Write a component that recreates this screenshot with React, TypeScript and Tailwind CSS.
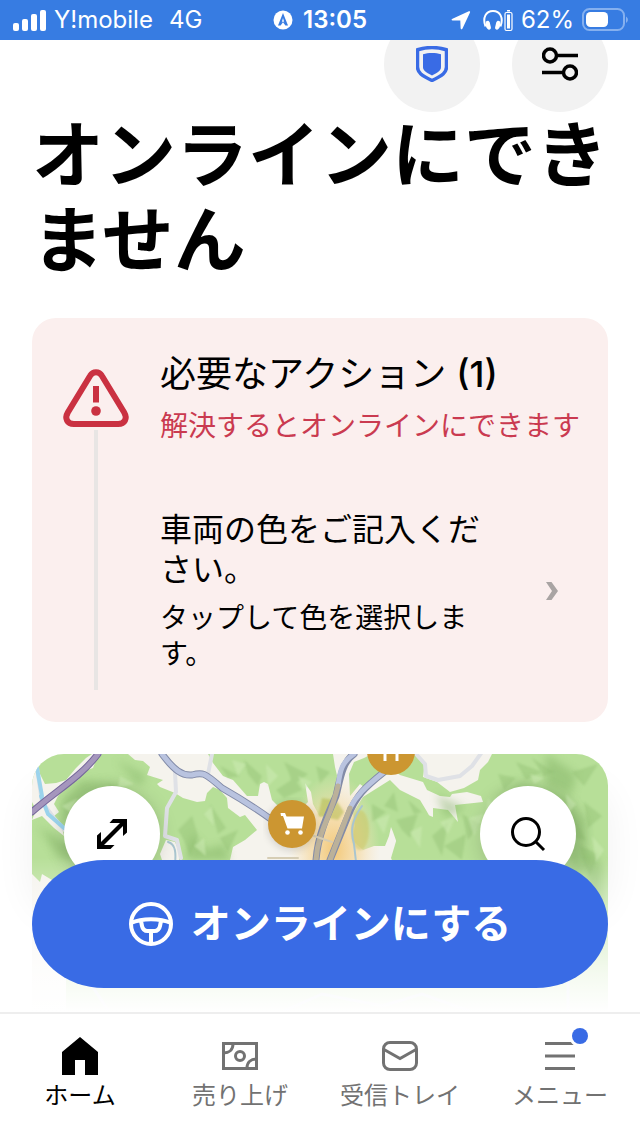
import type { ReactNode } from "react";

const jp = "font-['Inter','Noto_Sans_CJK_JP',sans-serif]";

function StatusBar() {
  return (
    <div className="sticky top-0 z-20 flex h-10 items-center justify-between bg-[#377ce2] px-3 text-2xl leading-10 text-white">
      <div className="flex flex-1 items-center">
        <svg className="mr-2 h-6 w-[34px]" viewBox="0 0 34 24" fill="currentColor" aria-hidden="true">
          <rect x="1" y="15" width="6" height="8" rx="2" />
          <rect x="10" y="11" width="6" height="12" rx="2" />
          <rect x="19" y="6" width="6" height="17" rx="2" />
          <rect x="28" y="2" width="6" height="21" rx="2" />
        </svg>
        <span>Y!mobile</span>
        <span className="ml-4">4G</span>
      </div>
      <div className="flex items-center gap-2.5">
        <svg className="h-5 w-5" viewBox="0 0 20 20" aria-hidden="true">
          <circle cx="10" cy="10" r="9.5" fill="#fff" />
          <path d="M10 3l5 12.500h-2.600L10 12.300 7.600 15.500H5z" fill="#377ce2" />
          <path d="M10 8l1.300 4.500L10 11.200l-1.300 1.300z" fill="#fff" />
        </svg>
        <span className="font-semibold">13:05</span>
      </div>
      <div className="flex flex-1 items-center justify-end">
        <svg className="mr-3 h-5 w-5" viewBox="0 0 20 20" fill="currentColor" aria-hidden="true">
          <path d="M17.800 1.300L1.500 8.700c-1.400.7-1.100 1.600.1 1.700l7.700.2.300 7.500c.1 1.500 1.300 1.700 1.900.3l7.500-16c.4-.9-.3-1.500-1.200-1.100z" />
        </svg>
        <svg className="mr-2 h-6 w-[30px]" viewBox="0 0 30 24" aria-hidden="true">
          <path d="M2.500 18.500C-.8 9.500 3 3 10 3s10.800 6.500 7.500 15.500" fill="none" stroke="#fff" strokeWidth="2" />
          <path d="M3 13.500c1.500-1.400 3-1 3.700.8l1.200 5c.4 1.800-1.700 3.200-3.300 1.800C2.600 19 2.300 16 3 13.500zM17 13.500c-1.500-1.400-3-1-3.700.8l-1.200 5c-.4 1.800 1.700 3.200 3.300 1.800C17.400 19 17.700 16 17 13.500z" fill="#fff" />
          <rect x="22" y="4.500" width="7" height="18" rx="1.500" fill="none" stroke="#fff" strokeWidth="1.200" />
          <rect x="24" y="6.500" width="3" height="14" fill="#fff" />
          <rect x="24" y="2" width="3" height="1.500" fill="#fff" />
        </svg>
        <span>62%</span>
        <svg className="ml-2 h-6 w-[46px]" viewBox="0 0 46 24" aria-hidden="true">
          <rect x="1" y="1" width="41" height="21" rx="6.500" fill="none" stroke="#85b0ef" strokeWidth="2" />
          <rect x="4" y="4" width="22" height="15" rx="4.500" fill="#fff" />
          <path d="M44 8.500c2.500 1.500 2.500 5 0 6.500z" fill="#85b0ef" />
        </svg>
      </div>
    </div>
  );
}

function RoundButton({ label, tone, children }: { label: string; tone: string; children: ReactNode }) {
  return (
    <button type="button" aria-label={label} className={`flex h-24 w-24 items-center justify-center rounded-full ${tone}`}>
      {children}
    </button>
  );
}

function ActionCard() {
  return (
    <section className="flex gap-8 rounded-3xl bg-[#fbefee] py-8 pr-7 pl-8">
      <div className="flex w-16 shrink-0 flex-col items-center pt-4">
        <svg className="h-16 w-16 overflow-visible" viewBox="2 0 64 64" aria-hidden="true">
          <path
            d="M28.300 8.500c2.600-4.500 8.800-4.500 11.400 0l22.500 37c3.500 6 .5 11.500-6 11.500H11.800c-6.500 0-9.500-5.500-6-11.500z"
            fill="none"
            stroke="#ca3141"
            strokeWidth="6"
            transform="translate(0 1)"
          />
          <path d="M31 20h6v16.500h-6z" fill="#ca3141" />
          <circle cx="34" cy="45" r="4.800" fill="#ca3141" />
        </svg>
        <div className="w-1 flex-1 bg-[#e8e5e4]" />
      </div>
      <div className="min-w-0 flex-1 pb-[18px]">
        <h2 className="text-4xl leading-12">
          必要なアクション <span className="font-medium">(1)</span>
        </h2>
        <p className="text-[28px] leading-14 whitespace-nowrap text-[#ca3a50]">解決するとオンラインにできます</p>
        <a href="#color" className="mt-14 flex items-center justify-between">
          <span className="max-w-[328px]">
            <span className="block text-[32px] leading-10">車両の色をご記入ください。</span>
            <span className="mt-2.5 block text-[28px] leading-9">タップして色を選択します。</span>
          </span>
          <svg className="mr-[22px] h-[18px] w-3 shrink-0" viewBox="0 0 12 18" fill="#a9a4a3" aria-hidden="true">
            <path d="M0 0h5.500L12 9l-6.500 9H0l6-9z" />
          </svg>
        </a>
      </div>
    </section>
  );
}

function MapArt() {
  return (
    <svg className="absolute inset-0 h-full w-full" viewBox="0 0 576 258" preserveAspectRatio="xMidYMin slice" aria-hidden="true">
      <defs>
        <linearGradient id="fade" x1="0" x2="0" y1="0" y2="1">
          <stop offset="0.400" stopColor="#fff" stopOpacity="0" />
          <stop offset="0.600" stopColor="#fff" stopOpacity="0.450" />
          <stop offset="0.850" stopColor="#fff" stopOpacity="0.850" />
          <stop offset="1" stopColor="#fff" />
        </linearGradient>
        <radialGradient id="town">
          <stop offset="0" stopColor="#f3c878" />
          <stop offset="0.550" stopColor="#f6dba6" stopOpacity="0.700" />
          <stop offset="1" stopColor="#f7e6c4" stopOpacity="0" />
        </radialGradient>
        <filter id="soft">
          <feGaussianBlur stdDeviation="4" />
        </filter>
        <filter id="crease">
          <feGaussianBlur stdDeviation="1" />
        </filter>
      </defs>
      <rect width="576" height="258" fill="#b7df98" />

      {/* valleys */}
      <g fill="#f5f3ed">
        <path d="M0 22L5 12L8 20L13 30L24 29L34 26L44 14L54 4L60 0H70L64 6L61 14L50 18L46 26L34 32L26 42L22 50L27 58L22 62L30 74L32 82L22 74L10 62L0 66L4 56L0 48Z" />
        <path d="M96 0L103 6L111 7L118 13L115 21L131 26L125 30L128 33L143 39L151 44L165 48L173 47L175 39L181 33L188 36L195 44L196 54L208 63L213 61L225 76L213 86L201 93L198 106V132H350L355 103L357 84L352 78L348 86L345 95L350 106L374 106L366 96L372 78L380 82L392 70L388 49L391 59L401 63L401 54L416 56L426 68L423 51L451 48L449 42L435 38L420 40L418 43L408 42L395 36L391 28L368 21L340 0Z" />
        <path d="M385 0L393 9L391 23L405 28L418 38L432 34L446 26L448 16L456 8L460 0Z" />
        <path d="M0 120L8 128L10 120L20 126L24 134L22 140L34 146V258H0Z" />
        <path d="M128 100L134 86L143 88L148 100L146 112H132Z" />
      </g>

      {/* wooded hills */}
      <g fill="#b7df98">
        <path d="M176 0L181 9L191 22L201 26L215 42L226 42L228 30L232 28L236 30L240 46L250 56L272 52L276 48L273 29L279 38L281 50L288 63L298 60L304 46L306 26L303 13L301 0Z" />
        <path d="M317 20L322 8L332 4L340 0H385L380 10L366 18L350 22L336 36L328 30L318 42Z" />
        <path d="M358 26L368 36L376 40L388 46L394 56L402 70L392 90L374 106L369 104L371 88L366 92L361 78L359 73L357 82L353 92L342 92L331 96L320 86L323 72L321 59L331 43Z" />
        <path d="M359 104L368 74L382 70L400 80V132H372Z" />
      </g>

      {/* hill shading */}
      <g fill="#76a858" opacity="0.400" filter="url(#soft)">
        <path d="M30 46l20-20 36 4 24 16 16 26-8 6-26-30-36-2-26 30zM6 72l40 24 20 20-40-14zM84 6l30 16-6 10zM160 80l14 16 18-6 6 16h-44zM460 44l30-16 44 14 20 24v50l-14 10-8-50-34-36zM514 0l30 20-4 20-26-8zM546 90l24 20v50l-12-20zM404 40l30 14-20 10z" />
      </g>
      <g fill="#8ab96c" opacity="0.350" filter="url(#crease)">
        <path d="M188 12l20 10-12 2zM212 6l18 16-4 10-10-12zM252 8l24 12-16 12-2-10zM244 36l18-12 8 12-18 8zM284 12l14 6-10 12zM146 76l14-14 6 20-8 20-6-16zM178 50l16 24-8 6zM188 84l18-8-10 22zM340 50l14 8-14 10zM352 52l10-14 4 20zM364 66l22-6-8 24-8-8zM400 82l16-14-6 34zM412 92l22-12-4 26zM430 60l18 10-12 16zM376 46l14 12-8 2zM466 20l18 4-12 12zM484 8l26 10-16 8zM500 4l22 14-10 4zM540 18l26-8-14 22zM552 48l18 14-14 12zM548 92l18 8-8 22-6-12zM540 60l14 26-10-2zM30 90l26 8-10 10zM76 30l28 10-18 6z" />
      </g>
      <g fill="#cbeab1" opacity="0.600" filter="url(#crease)">
        <path d="M200 6l14 4-8 12zM234 10l12 12-10 10zM266 22l14 6-8 8zM162 92l10-8 2 18zM172 60l8-8 2 20zM344 66l14-6-6 20zM378 78l12-6-2 22zM436 64l16-4-10 22zM456 44l8 12-10 4zM498 20l14 4-10 6zM534 40l10 10-8 10zM560 82l12 14-8 12zM88 22l14 8-16 4zM30 52l16-8-8 14zM408 68l16-6-8 18z" />
      </g>

      <ellipse cx="302" cy="96" rx="46" ry="76" fill="url(#town)" />
      <ellipse cx="328" cy="76" rx="9" ry="20" fill="#c8c45c" opacity="0.500" filter="url(#crease)" />
      <path d="M286 62l4-18 14 2 8 12-6 8z" fill="#b3bb4e" opacity="0.550" filter="url(#crease)" />

      {/* rivers and roads */}
      <g fill="none" strokeLinecap="round" strokeLinejoin="round">
        <path d="M5 14l5 34 12 16 14 16M143 18l1 20-9 16-2 28 12 4 4 18M180 0l-4 20M384 0l9 10 1 12 12 4 22-4 12-10 10-14" stroke="#dfe1e6" strokeWidth="4" />
        <path d="M5 14l5 28M9 42l7 18 16 14" stroke="#9bd3ec" strokeWidth="4" />
        <path d="M330 52c-10 14-12 24-8 38l2 18M136 88c8 2 8 12 7 22" stroke="#a9c5cf" strokeWidth="2" />
        <path d="M0 58C22 38 48 24 66 0" stroke="#75679b" strokeWidth="7" />
        <path d="M0 58C22 38 48 24 66 0" stroke="#a596bd" strokeWidth="5" />
        <path d="M130 0C142 16 150 22 160 21C170 18 172 18 190 34C204 42 218 50 240 66M322 0c-12 8-14 26-18 42-10 22-18 40-20 64M352 18c-20 16-28 24-36 44l-18 44" stroke="#828ba8" strokeWidth="7" />
        <path d="M130 0C142 16 150 22 160 21C170 18 172 18 190 34C204 42 218 50 240 66M322 0c-12 8-14 16-16 32M352 18c-20 16-28 24-34 36" stroke="#b9c3df" strokeWidth="5" />
        <path d="M306 32c-8 34-20 44-22 74M318 54l-20 52" stroke="#bbb19a" strokeWidth="5" />
        <path d="M282 82l18 6M236 104h30" stroke="#d6cdb4" strokeWidth="2" />
      </g>
      <g fill="none" stroke="#c5cde6" strokeWidth="3">
        <path d="M0 170l32 20 44 66M250 258l40-18 60 12 40-12 50 18M520 200l56-22M536 190v68" />
      </g>
      <rect width="576" height="258" fill="url(#fade)" />

      {/* place markers */}
      <circle cx="260" cy="72" r="24" fill="#000" opacity="0.150" filter="url(#soft)" />
      <circle cx="260" cy="70" r="24" fill="#cc9631" />
      <path d="M248.500 59h4.500l1.500 3.500H272l-2 12h-14.500l-4.500-12.500h-2z" fill="#fff" />
      <circle cx="255.500" cy="78.500" r="2.300" fill="#fff" />
      <circle cx="268.500" cy="78.500" r="2.300" fill="#fff" />
      <circle cx="359" cy="-3" r="24" fill="#cc9631" />
      <path d="M353 0v7M365 0v7" fill="none" stroke="#fff" strokeWidth="3" />
    </svg>
  );
}

function MapPanel() {
  return (
    <section className="relative mt-8 h-[258px]">
      <div className="absolute inset-x-0 top-8 h-32 rounded-[32px] shadow-[0_0_40px_rgba(0,0,0,0.06)]" />
      <div className="absolute inset-0 overflow-hidden rounded-t-[32px] bg-white">
        <MapArt />
      </div>
      <div className="relative flex justify-between p-8">
        <RoundButton label="地図を拡大" tone="bg-white shadow-[0_4px_20px_rgba(0,0,0,0.15)]">
          <svg className="h-[30px] w-[30px]" viewBox="0 0 30 30" fill="currentColor" aria-hidden="true">
            <path d="M12.500 4L16 0h14v13.500L26 17V7L7 26h10.500L13.500 30H0V16.500L4 13v10L23 4z" />
          </svg>
        </RoundButton>
        <RoundButton label="検索" tone="bg-white shadow-[0_4px_20px_rgba(0,0,0,0.15)]">
          <svg className="h-9 w-9" viewBox="0 0 36 36" fill="none" stroke="currentColor" strokeWidth="3" aria-hidden="true">
            <circle cx="16" cy="16" r="13.500" />
            <path d="M25.500 25.500l8.500 8.500" />
          </svg>
        </RoundButton>
      </div>
      <button
        type="button"
        className="absolute inset-x-0 bottom-6 flex h-32 items-center justify-center gap-[18px] rounded-[72px/64px] bg-[#396be5] text-[40px] leading-none font-bold text-white"
      >
        <svg className="h-11 w-11" viewBox="0 0 44 44" fill="none" stroke="currentColor" strokeWidth="4" aria-hidden="true">
          <circle cx="22" cy="22" r="20" />
          <path d="M2 21c11-5 29-5 40 0M12 19l1 5c.8 3.700 2.700 5 5.500 5h7c2.800 0 4.700-1.300 5.500-5l1-5M22 29v13" />
        </svg>
        オンラインにする
      </button>
    </section>
  );
}

function NavItem({ label, active, children }: { label: string; active?: boolean; children: ReactNode }) {
  return (
    <a
      href="#"
      aria-current={active ? "page" : undefined}
      className={`flex flex-1 flex-col items-center pt-5 text-2xl leading-9 ${active ? "text-black" : "text-[#727272]"}`}
    >
      {children}
      {label}
    </a>
  );
}

function TabBar() {
  return (
    <nav className="relative flex flex-1 border-t-2 border-[#eeeeee] bg-white">
      <NavItem label="ホーム" active>
        <svg className="h-11 w-11" viewBox="0 0 44 44" fill="currentColor" aria-hidden="true">
          <path d="M22 3l18 15v23H27V26H17v15H4V18z" />
        </svg>
      </NavItem>
      <NavItem label="売り上げ">
        <svg className="h-11 w-11" viewBox="0 0 44 44" fill="none" stroke="currentColor" strokeWidth="3" aria-hidden="true">
          <path d="M5.500 9.500h33v25h-33zM15 10c0 6-4 9-9.500 9M29 34c0-6 4-9 9.500-9" />
          <circle cx="22" cy="22" r="4.500" />
        </svg>
      </NavItem>
      <NavItem label="受信トレイ">
        <svg className="h-11 w-11" viewBox="0 0 44 44" fill="none" stroke="currentColor" strokeWidth="3" aria-hidden="true">
          <rect x="5.500" y="8.500" width="33" height="27" rx="6.500" />
          <path d="M6 15.500l16 9 16-9" />
        </svg>
      </NavItem>
      <NavItem label="メニュー">
        <svg className="h-11 w-11 overflow-visible" viewBox="0 0 44 44" aria-hidden="true">
          <path d="M7 9.500h30M7 22h30M7 34.500h30" stroke="currentColor" strokeWidth="3" />
          <circle cx="42" cy="2" r="11" fill="#fff" />
          <circle cx="42" cy="2" r="8" fill="#396be5" />
        </svg>
      </NavItem>
    </nav>
  );
}

export default function App() {
  return (
    <div className={`flex min-h-screen flex-col bg-white text-black ${jp}`}>
      <StatusBar />
      <main className="-mt-6 px-8">
        <div className="flex justify-end gap-8">
          <RoundButton label="セーフティ" tone="bg-[#f2f2f2]">
            <svg className="h-9 w-8" viewBox="0 0 32 36" aria-hidden="true">
              <path d="M16 1.500c5 0 9.500.8 14.500 2.300V21c0 5.500-4 8.500-14.500 13.500C5.500 29.500 1.500 26.500 1.500 21V3.800C6.500 2.300 11 1.500 16 1.500z" fill="none" stroke="#396be5" strokeWidth="3.500" />
              <path d="M16 7c3.500 0 6 .4 9 1.200V21c0 3.500-2.500 5-9 8.500C9.500 26 7 24.500 7 21V8.200C10 7.400 12.500 7 16 7z" fill="#396be5" />
            </svg>
          </RoundButton>
          <RoundButton label="設定" tone="bg-[#f2f2f2]">
            <svg className="h-9 w-9" viewBox="0 0 36 36" fill="none" stroke="currentColor" strokeWidth="3.500" aria-hidden="true">
              <circle cx="8" cy="9.500" r="6.500" />
              <path d="M15 9.500h21M0 26.500h21" />
              <circle cx="28" cy="26.500" r="6.500" />
            </svg>
          </RoundButton>
        </div>
        <h1 className="mb-9 text-[72px] leading-[85px] font-bold">オンラインにできません</h1>
        <ActionCard />
        <MapPanel />
      </main>
      <TabBar />
    </div>
  );
}
